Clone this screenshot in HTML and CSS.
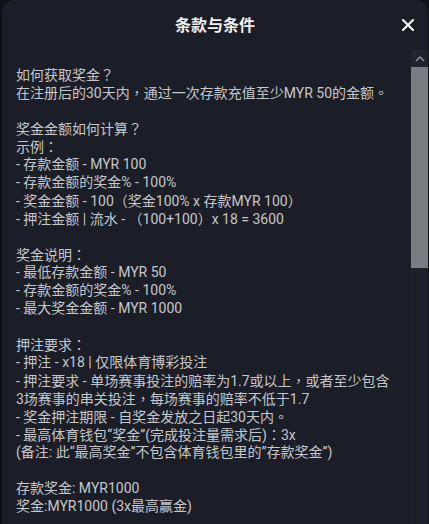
FILE: index.html
```html
<!DOCTYPE html>
<html lang="zh-Hans">
<head>
<meta charset="utf-8">
<link rel="stylesheet" href="styles.css">
</head>
<body>
<div class="modal">
  <div class="header">
    <h1 class="title">条款与条件</h1>
    <span class="close">
      <svg width="12" height="12" viewBox="0 0 12 12"><path d="M1 1L11 11M11 1L1 11" stroke="#ffffff" stroke-width="2" stroke-linecap="square"/></svg>
    </span>
  </div>
  <div class="body">
    <div class="content">
      <p class="line">如何获取奖金<span class="p" lang="zh-Hant">？</span></p>
      <p class="line">在注册后的30天内<span class="p" lang="zh-Hant">，</span>通过一次存款充值至少MYR 50的金额<span class="p" lang="zh-Hant">。</span></p>
      <p class="line blank"></p>
      <p class="line">奖金金额如何计算<span class="p" lang="zh-Hant">？</span></p>
      <p class="line">示例<span class="p" lang="zh-Hant">：</span></p>
      <p class="line">- 存款金额 - MYR 100</p>
      <p class="line">- 存款金额的奖金% - 100%</p>
      <p class="line">- 奖金金额 - 100<span class="p" lang="zh-Hant">（</span>奖金100% x 存款MYR 100<span class="p" lang="zh-Hant">）</span></p>
      <p class="line">- 押注金额 | 流水 - <span class="p" lang="zh-Hant">（</span>100+100<span class="p" lang="zh-Hant">）</span>x 18 = 3600</p>
      <p class="line blank"></p>
      <p class="line">奖金说明<span class="p" lang="zh-Hant">：</span></p>
      <p class="line">- 最低存款金额 - MYR 50</p>
      <p class="line">- 存款金额的奖金% - 100%</p>
      <p class="line">- 最大奖金金额 - MYR 1000</p>
      <p class="line blank"></p>
      <p class="line">押注要求<span class="p" lang="zh-Hant">：</span></p>
      <p class="line">- 押注 - x18 | 仅限体育博彩投注</p>
      <p class="line">- 押注要求 - 单场赛事投注的赔率为1.7或以上<span class="p" lang="zh-Hant">，</span>或者至少包含</p>
      <p class="line">3场赛事的串关投注<span class="p" lang="zh-Hant">，</span>每场赛事的赔率不低于1.7</p>
      <p class="line">- 奖金押注期限 - 自奖金发放之日起30天内<span class="p" lang="zh-Hant">。</span></p>
      <p class="line">- 最高体育钱包“奖金”(完成投注量需求后)<span class="p" lang="zh-Hant">：</span>3x</p>
      <p class="line">(备注: 此“最高奖金”不包含体育钱包里的”存款奖金”)</p>
      <p class="line blank"></p>
      <p class="line">存款奖金: MYR1000</p>
      <p class="line">奖金:MYR1000 (3x最高赢金)</p>
      <p class="line blank"></p>
    </div>
    <div class="scrollbar">
      <div class="sb-button">
        <svg width="10" height="6" viewBox="0 0 10 6"><path d="M1 5L5 1L9 5" stroke="#8a8b8f" stroke-width="1.6" fill="none"/></svg>
      </div>
      <div class="sb-thumb"></div>
      <div class="sb-track"></div>
    </div>
  </div>
</div>
</body>
</html>
```
FILE: styles.css
```css
html, body {
  margin: 0;
  padding: 0;
  background: #0f1115;
  height: 524px;
  overflow: hidden;
}
.modal {
  margin: 0 1px 0 2px;
  height: 524px;
  background: #1b1e27;
  border-radius: 12px 12px 0 0;
  display: flex;
  flex-direction: column;
  overflow: hidden;
  font-family: Roboto, "Noto Sans CJK SC", sans-serif;
}
.header {
  height: 50px;
  flex: 0 0 50px;
  display: flex;
  align-items: center;
  justify-content: center;
  position: relative;
}
.title {
  margin: 0;
  font-size: 16px;
  font-weight: 700;
  color: #f2f2f3;
  line-height: 20px;
  padding-top: 1px;
}
.close {
  position: absolute;
  right: 14px;
  top: 19px;
  width: 12px;
  height: 12px;
  display: flex;
}
.body {
  flex: 1;
  display: flex;
  min-height: 0;
}
.content {
  flex: 1;
  padding: 15px 0 0 14px;
  overflow: hidden;
}
.line {
  margin: 0;
  font-size: 14px;
  line-height: 18px;
  height: 18px;
  color: #c6c7ca;
  white-space: nowrap;
  text-spacing-trim: space-all;
}
.p {
  font-family: "Noto Sans CJK TC", sans-serif;
}
.scrollbar {
  width: 17px;
  flex: 0 0 17px;
  display: flex;
  flex-direction: column;
  background: #1d2028;
}
.sb-button {
  height: 17px;
  display: flex;
  align-items: center;
  justify-content: center;
  background: #20232b;
}
.sb-thumb {
  height: 201px;
  background: #7b7c80;
}
.sb-track {
  flex: 1;
}
```
